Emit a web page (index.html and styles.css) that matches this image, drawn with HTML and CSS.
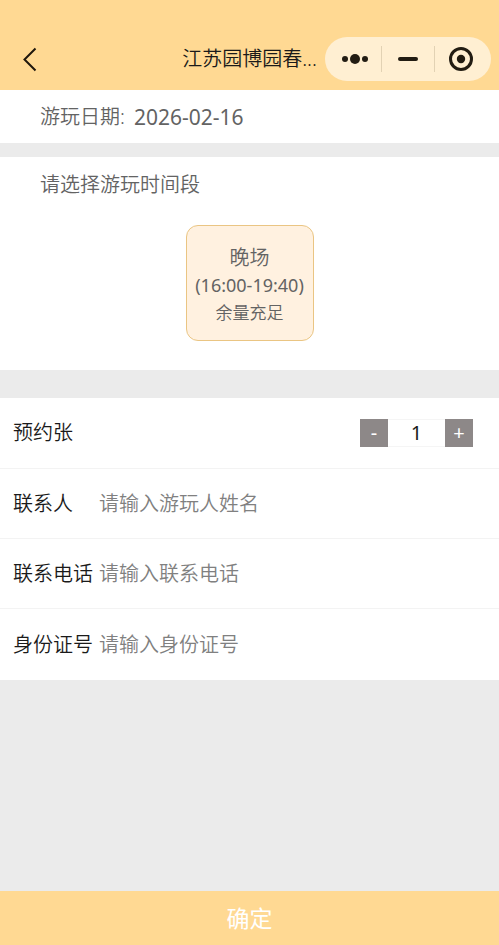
FILE: index.html
```html
<!DOCTYPE html>
<html lang="zh-CN">
<head>
    <meta charset="UTF-8">
    <meta name="viewport" content="width=device-width, initial-scale=1.0">
    <title>江苏园博园春...</title>
    <link rel="stylesheet" href="styles.css">
</head>
<body>
    <header class="navbar">
        <button type="button" class="back-button" aria-label="返回">
            <svg width="16" height="26" viewBox="0 0 16 26" fill="none" stroke="#1f170c" stroke-width="2">
                <path d="M13.5 2.5 2.5 13.5l11 11"/>
            </svg>
        </button>
        <h1>江苏园博园春...</h1>
        <div class="capsule">
            <button type="button" aria-label="更多">
                <svg width="28" height="12" viewBox="0 0 28 12" fill="#221c12">
                    <circle cx="4" cy="6" r="3"/>
                    <circle cx="14" cy="6" r="5"/>
                    <circle cx="24" cy="6" r="3"/>
                </svg>
            </button>
            <button type="button" aria-label="最小化">
                <svg width="20" height="6" viewBox="0 0 20 6">
                    <rect y="1" width="20" height="4" rx="2" fill="#221c12"/>
                </svg>
            </button>
            <button type="button" aria-label="关闭">
                <svg width="26" height="26" viewBox="0 0 26 26">
                    <circle cx="13" cy="13" r="10.5" fill="none" stroke="#221c12" stroke-width="3"/>
                    <circle cx="13" cy="13" r="4.2" fill="#221c12"/>
                </svg>
            </button>
        </div>
    </header>

    <main>
        <section class="date-bar">
            <span>游玩日期:</span>
            <time datetime="2026-02-16">2026-02-16</time>
        </section>

        <section class="session">
            <h2>请选择游玩时间段</h2>
            <button type="button" class="session-card">
                <span class="session-name">晚场</span>
                <span class="session-time">(16:00-19:40)</span>
                <span class="session-stock">余量充足</span>
            </button>
        </section>

        <form class="booking" id="bookingForm">
            <div class="form-row">
                <label for="count">预约张</label>
                <div class="stepper">
                    <button type="button" id="minus" aria-label="减少">-</button>
                    <input type="text" id="count" value="1" inputmode="numeric">
                    <button type="button" id="plus" aria-label="增加">+</button>
                </div>
            </div>
            <div class="form-row">
                <label for="userName">联系人</label>
                <input type="text" id="userName" class="field" placeholder="请输入游玩人姓名">
            </div>
            <div class="form-row">
                <label for="phone">联系电话</label>
                <input type="tel" id="phone" class="field" placeholder="请输入联系电话">
            </div>
            <div class="form-row">
                <label for="idCard">身份证号</label>
                <input type="text" id="idCard" class="field" placeholder="请输入身份证号">
            </div>
        </form>
    </main>

    <button type="submit" form="bookingForm" class="submit-button">确定</button>

    <script>
        const count = document.getElementById('count');

        function changeCount(step) {
            count.value = Math.max(1, (parseInt(count.value, 10) || 1) + step);
        }

        document.getElementById('minus').addEventListener('click', () => changeCount(-1));
        document.getElementById('plus').addEventListener('click', () => changeCount(1));
    </script>
</body>
</html>
```

FILE: styles.css
```css
:root {
    --primary-color: #ffd993;
    --page-color: #ebebeb;
    --text-color: #1a1a1a;
    --muted-color: #636363;
}

* {
    box-sizing: border-box;
}

body {
    margin: 0;
    min-height: 100vh;
    display: flex;
    flex-direction: column;
    background: var(--page-color);
    color: var(--text-color);
    font-family: "Noto Sans", "Noto Sans CJK SC", sans-serif;
    font-size: 20px;
    font-weight: 350;
    line-height: 28px;
}

button,
input {
    margin: 0;
    padding: 0;
    border: none;
    border-radius: 0;
    background: none;
    color: inherit;
    font: inherit;
}

button {
    cursor: pointer;
}

svg {
    display: block;
}

h1,
h2 {
    margin: 0;
    font-size: 20px;
    font-weight: 350;
}

main {
    flex: 1;
}

/* 导航栏 */
.navbar {
    display: grid;
    grid-template-columns: 1fr auto 1fr;
    align-items: center;
    padding: 36px 8px 8px;
    background: var(--primary-color);
}

.back-button {
    justify-self: start;
    margin-left: 14px;
}

.capsule {
    justify-self: end;
    display: flex;
    align-items: center;
    width: 166px;
    height: 44px;
    margin: 1px 0;
    padding: 0 4px;
    border-radius: 22px;
    background: #ffefd2;
}

.capsule button {
    flex: 1;
    height: 26px;
    display: flex;
    align-items: center;
    justify-content: center;
}

.capsule button + button {
    border-left: 1px solid #e2d2b4;
}

/* 日期和场次 */
.date-bar {
    display: flex;
    gap: 9px;
    padding: 13px 40px 12px;
    background: #fff;
    color: var(--muted-color);
}

.date-bar time {
    font-size: 21px;
    font-weight: 400;
}

.session {
    margin: 14px 0 28px;
    padding: 14px 40px 29px;
    background: #fff;
    color: var(--muted-color);
}

.session-card {
    display: flex;
    flex-direction: column;
    align-items: center;
    width: 128px;
    margin: 26px auto 0;
    padding: 18px 0 14px;
    border: 1px solid #eac583;
    border-radius: 12px;
    background: #fff1e0;
}

.session-time {
    font-size: 18px;
    font-weight: 400;
    line-height: 27px;
}

.session-stock {
    font-size: 17px;
    line-height: 27px;
}

/* 预约表单 */
.booking {
    background: #fff;
}

.form-row {
    display: flex;
    align-items: center;
    gap: 6px;
    min-height: 70px;
    padding: 0 26px 0 13px;
    border-bottom: 1px solid #f3f3f3;
}

.form-row:first-child {
    min-height: 71px;
}

.form-row:last-child {
    min-height: 71px;
    border-bottom: none;
}

.form-row label {
    width: 80px;
    white-space: nowrap;
}

.field {
    flex: 1;
    min-width: 0;
    outline: none;
}

.field::placeholder {
    color: #808080;
    opacity: 1;
}

.stepper {
    display: flex;
    margin-left: auto;
    font-weight: 400;
}

.stepper button {
    width: 28px;
    height: 28px;
    background: #8d8888;
    color: #fff;
}

.stepper input {
    width: 57px;
    height: 28px;
    border: solid #f5f5f5;
    border-width: 1px 0;
    text-align: center;
}

.submit-button {
    height: 54px;
    background: var(--primary-color);
    color: #fff;
    font-size: 23px;
    font-weight: 400;
}
```
